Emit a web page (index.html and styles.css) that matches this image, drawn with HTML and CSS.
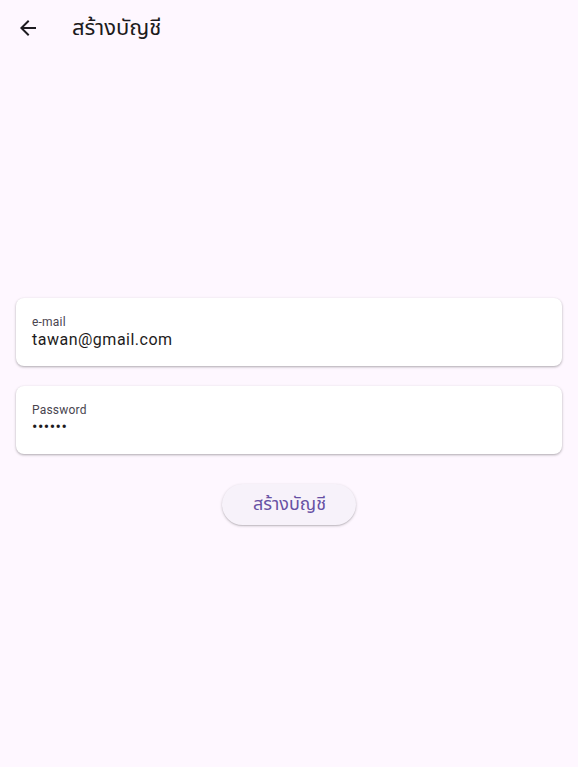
FILE: index.html
```html
<!DOCTYPE html>
<html lang="th">
<head>
<meta charset="utf-8">
<title>สร้างบัญชี</title>
<link rel="stylesheet" href="styles.css">
</head>
<body>
<div class="page">
  <header class="appbar">
    <button class="back" aria-label="Back">
      <svg width="24" height="24" viewBox="0 0 24 24"><path d="M20 11H7.83l5.59-5.59L12 4l-8 8 8 8 1.41-1.41L7.83 13H20v-2z" fill="#1d1b20"/></svg>
    </button>
    <h1 class="title">สร้างบัญชี</h1>
  </header>
  <main class="content">
    <div class="field">
      <div class="label">e-mail</div>
      <div class="value">tawan@gmail.com</div>
    </div>
    <div class="field">
      <div class="label">Password</div>
      <div class="value dots">••••••</div>
    </div>
    <div class="actions">
      <button class="btn">สร้างบัญชี</button>
    </div>
  </main>
</div>
</body>
</html>
```

FILE: styles.css
```css
* { box-sizing: border-box; }
html, body { margin: 0; padding: 0; }
body {
  background: #fef7ff;
  font-family: Roboto, "Noto Sans Thai", "Noto Sans", sans-serif;
  color: #1d1b20;
}
.page {
  height: 767px;
  display: flex;
  flex-direction: column;
}
.appbar {
  height: 56px;
  display: flex;
  align-items: center;
  padding: 0 4px;
  flex: none;
}
.back {
  width: 48px;
  height: 48px;
  border: none;
  background: none;
  padding: 0;
  display: flex;
  align-items: center;
  justify-content: center;
}
.title {
  margin: 0 0 0 20px;
  font-size: 22px;
  font-weight: 400;
  color: #1d1b20;
}
.content {
  flex: 1;
  display: flex;
  flex-direction: column;
  justify-content: center;
  padding: 0 16px;
}
.field {
  height: 68px;
  background: #ffffff;
  border-radius: 8px;
  box-shadow: 0 1px 3px rgba(0,0,0,0.22), 0 1px 2px rgba(0,0,0,0.12);
  padding: 16px 16px 0 16px;
}
.field + .field { margin-top: 20px; }
.label {
  font-size: 12px;
  line-height: 16px;
  color: #49454f;
  letter-spacing: 0.2px;
}
.value {
  font-size: 16px;
  line-height: 20px;
  letter-spacing: 0.5px;
  color: #1d1b20;
}
.dots {
  font-size: 16px;
  letter-spacing: 0.5px;
  line-height: 18px;
}
.actions {
  margin-top: 30px;
  display: flex;
  justify-content: center;
}
.btn {
  height: 41px;
  padding: 0 30px 0 31px;
  border: none;
  border-radius: 21px;
  background: #f7f2fa;
  color: #6750a4;
  font-family: Roboto, "Noto Sans Thai", "Noto Sans", sans-serif;
  font-size: 18px;
  box-shadow: 0 1px 3px rgba(0,0,0,0.2), 0 1px 1px rgba(0,0,0,0.1);
}
```
